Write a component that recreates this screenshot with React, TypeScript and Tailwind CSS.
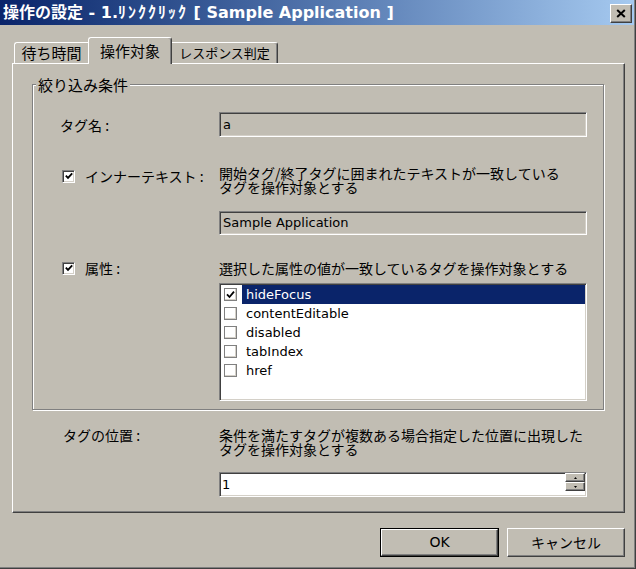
import React from "react";

const JP = "font-['Noto_Sans_CJK_JP',sans-serif]";
const LAT = "font-['DejaVu_Sans','Noto_Sans_CJK_JP',sans-serif]";
const SUNKEN =
  "border border-t-[#808080] border-l-[#808080] border-b-white border-r-white shadow-[inset_1px_1px_0_#404040,inset_-1px_-1px_0_#d4d0c8]";
const RAISED =
  "border border-t-white border-l-white border-b-[#404040] border-r-[#404040] shadow-[inset_-1px_-1px_0_#808080]";

function Check({ checked = true }: { checked?: boolean }) {
  return (
    <span className={"w-[13px] h-[13px] bg-white flex items-center justify-center shrink-0 " + SUNKEN}>
      {checked && (
        <svg width="8" height="8" viewBox="0 0 8 8">
          <path d="M0.8 3.6 L3 5.9 L7.2 1.4" stroke="#000" strokeWidth="1.8" fill="none" />
        </svg>
      )}
    </span>
  );
}

function ListCheck({ checked }: { checked: boolean }) {
  return (
    <span className="w-[13px] h-[13px] bg-white border border-[#808080] shadow-[inset_-1px_-1px_0_#d4d0c8] flex items-center justify-center shrink-0">
      {checked && (
        <svg width="9" height="9" viewBox="0 0 9 9">
          <path d="M1 4.4 L3.5 7 L8 1.6" stroke="#000" strokeWidth="1.8" fill="none" />
        </svg>
      )}
    </span>
  );
}

function SpinBtn({ up }: { up?: boolean }) {
  return (
    <div className={"w-[20px] h-[9px] bg-[#c1bdb3] flex items-center justify-center " + RAISED}>
      <svg width="3" height="2" viewBox="0 0 3 2">
        {up ? <path d="M0 2 L1.5 0 L3 2 Z" fill="#000" /> : <path d="M0 0 L1.5 2 L3 0 Z" fill="#000" />}
      </svg>
    </div>
  );
}

const ITEMS = ["hideFocus", "contentEditable", "disabled", "tabIndex", "href"];

export default function App() {
  return (
    <div className={"w-[636px] h-[569px] bg-[#c1bdb3] border-r border-b border-[#404040] overflow-hidden text-black " + JP}>
      <div className="h-full border-r border-b border-[#808080] flex flex-col">
        {/* Title bar */}
        <div className="h-[25px] shrink-0 flex items-start justify-between pl-[3px] pr-[2px] bg-linear-to-r from-[#0a246a] to-[#a6caf0]">
          <span className={"mt-[3px] text-white font-bold text-[16px] leading-[19px] whitespace-nowrap " + LAT}>
            操作の設定 - 1.<span className="tracking-[2px]">ﾘﾝｸｸﾘｯｸ</span> [ Sample Application ]
          </span>
          <div className={"mt-[4px] w-[22px] h-[19px] bg-[#c1bdb3] flex items-center justify-center " + RAISED}>
            <svg width="10" height="9" viewBox="0 0 10 9">
              <path d="M1.2 1 L8.8 8 M8.8 1 L1.2 8" stroke="#000" strokeWidth="2" />
            </svg>
          </div>
        </div>

        {/* Tabs */}
        <div className="mt-[12px] ml-[12px] h-[26px] shrink-0 flex items-end">
          <div className="ml-[2px] w-[74px] h-[21px] border-t border-l border-white rounded-tl-[3px] flex items-center justify-center text-[15px] leading-[16px] whitespace-nowrap">
            待ち時間
          </div>
          <div className="relative z-10 -mb-px w-[84px] h-[27px] bg-[#c1bdb3] border-t border-l border-r border-white border-r-[#404040] rounded-t-[3px] shadow-[inset_-1px_0_0_#808080] flex items-center justify-center text-[15px] leading-[16px] whitespace-nowrap">
            操作対象
          </div>
          <div className="w-[106px] h-[21px] border-t border-r border-white border-r-[#404040] rounded-tr-[3px] shadow-[inset_-1px_0_0_#808080] flex items-center justify-center text-[13px] leading-[16px] whitespace-nowrap">
            レスポンス判定
          </div>
        </div>

        {/* Tab panel */}
        <div className="ml-[12px] w-[613px] h-[450px] shrink-0 border border-white border-r-[#404040] border-b-[#404040] shadow-[inset_-1px_-1px_0_#808080] pt-[20px] pl-[19px] flex flex-col">
          {/* Group box */}
          <div className="relative w-[572px] h-[326px] shrink-0 border border-[#808080] shadow-[inset_1px_1px_0_#fff,1px_1px_0_#fff] pt-[27px] flex flex-col">
            <div className="absolute left-[3px] -top-[9px] px-[2px] bg-[#c1bdb3] text-[15px] leading-[18px] whitespace-nowrap">
              絞り込み条件
            </div>

            {/* Row: tag name */}
            <div className="flex">
              <div className="w-[186px] pl-[27px] flex items-center text-[14px] leading-[14px] whitespace-nowrap">タグ名 :</div>
              <div className={"w-[368px] h-[25px] bg-[#c1bdb3] flex items-center pl-[3px] text-[13px] " + LAT + " " + SUNKEN}>a</div>
            </div>

            {/* Row: inner text */}
            <div className="mt-[29px] flex">
              <div className="w-[186px] pl-[29px] h-[20px] flex items-center gap-[10px] text-[14px] leading-[14px] whitespace-nowrap">
                <Check />
                <span>インナーテキスト :</span>
              </div>
              <div className="w-[368px] flex flex-col">
                <div className="text-[14px] leading-[14px] whitespace-nowrap">
                  開始タグ/終了タグに囲まれたテキストが一致している
                  <br />
                  タグを操作対象とする
                </div>
                <div className={"mt-[17px] h-[24px] bg-[#c1bdb3] flex items-center pl-[3px] text-[13px] whitespace-nowrap " + LAT + " " + SUNKEN}>
                  Sample Application
                </div>
              </div>
            </div>

            {/* Row: attributes */}
            <div className="mt-[26px] flex">
              <div className="w-[186px] pl-[29px] h-[14px] flex items-center gap-[10px] text-[14px] leading-[14px] whitespace-nowrap">
                <Check />
                <span>属性 :</span>
              </div>
              <div className="w-[368px] flex flex-col">
                <div className="text-[14px] leading-[14px] whitespace-nowrap">選択した属性の値が一致しているタグを操作対象とする</div>
                <div className={"mt-[8px] h-[118px] bg-white pt-[1px] pl-[4px] pr-[1px] flex flex-col " + SUNKEN}>
                  {ITEMS.map((it, i) => (
                    <div key={it} className="h-[19px] flex items-center">
                      <ListCheck checked={i === 0} />
                      <div
                        className={
                          i === 0
                            ? "ml-[5px] flex-1 h-full flex items-center pl-[4px] bg-[#0a246a] text-white text-[13px] " + LAT
                            : "ml-[5px] flex-1 h-full flex items-center pl-[4px] text-[13px] " + LAT
                        }
                      >
                        {it}
                      </div>
                    </div>
                  ))}
                </div>
              </div>
            </div>
          </div>

          {/* Row: tag position */}
          <div className="mt-[18px] flex">
            <div className="w-[187px] pl-[31px] text-[14px] leading-[14px] whitespace-nowrap">タグの位置 :</div>
            <div className="w-[368px] flex flex-col">
              <div className="text-[14px] leading-[14px] whitespace-nowrap">
                条件を満たすタグが複数ある場合指定した位置に出現した
                <br />
                タグを操作対象とする
              </div>
              <div className={"mt-[16px] h-[25px] bg-white flex items-start justify-between pl-[2px] pr-[1px] " + SUNKEN}>
                <span className={"h-full flex items-center text-[13px] " + LAT}>1</span>
                <div className="flex flex-col">
                  <SpinBtn up />
                  <SpinBtn />
                </div>
              </div>
            </div>
          </div>
        </div>

        {/* Buttons */}
        <div className="mt-[15px] pr-[9px] flex justify-end gap-[8px]">
          <div className="w-[119px] h-[29px] border border-black">
            <div className={"w-full h-full flex items-center justify-center text-[14px] " + LAT + " " + RAISED}>OK</div>
          </div>
          <div className={"w-[118px] h-[29px] flex items-center justify-center text-[14px] " + RAISED}>キャンセル</div>
        </div>
      </div>
    </div>
  );
}
